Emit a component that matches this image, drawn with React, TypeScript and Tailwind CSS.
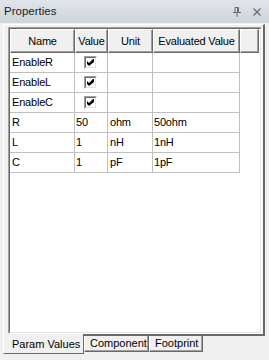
import React from 'react'

const rows = [
  { name: 'EnableR', check: true, value: '', unit: '', evaluated: '' },
  { name: 'EnableL', check: true, value: '', unit: '', evaluated: '' },
  { name: 'EnableC', check: true, value: '', unit: '', evaluated: '' },
  { name: 'R', check: false, value: '50', unit: 'ohm', evaluated: '50ohm' },
  { name: 'L', check: false, value: '1', unit: 'nH', evaluated: '1nH' },
  { name: 'C', check: false, value: '1', unit: 'pF', evaluated: '1pF' },
]

function CheckBox() {
  return (
    <span className="block w-[13px] h-[13px] border border-t-[#a0a0a0] border-l-[#a0a0a0] border-r-white border-b-white">
      <span className="flex items-center justify-center w-full h-full bg-white border border-t-[#696969] border-l-[#696969] border-r-[#e3e3e3] border-b-[#e3e3e3]">
        <svg width="7" height="7" viewBox="0 0 7 7">
          <polygon points="0,2 2,4 6,0 7,0 7,3 2,7 0,5" fill="#000" />
        </svg>
      </span>
    </span>
  )
}

function HeaderCell({ width, label }: { width: string; label?: string }) {
  return (
    <div
      className={`${width} h-full flex items-center justify-center bg-[#f0f0f0] border-l border-t border-l-white border-t-white border-r border-b border-r-[#696969] border-b-[#696969] shadow-[inset_-1px_-1px_0_#a0a0a0]`}
    >
      {label}
    </div>
  )
}

export default function App() {
  return (
    <div className="w-[269px] h-[360px] bg-[#f0f0f0] flex flex-col overflow-hidden text-black font-['Liberation_Sans',Arial,sans-serif]">
      {/* Title bar */}
      <div className="h-[23px] shrink-0 flex items-center pl-[4px] pr-[8px] bg-gradient-to-b from-[#e1e5ea] to-[#ced4db] text-[11.5px] text-[#1b1b1b]">
        <span className="flex-1">Properties</span>
        <svg width="8" height="10" viewBox="0 0 8 10" className="mr-[12px]">
          <path d="M2 0.5H5.5V5.5M2 0.5V5.5M0 5.5H8M4 5.5V10" stroke="#6b6b6b" strokeWidth="1" fill="none" />
          <path d="M4.5 1V5" stroke="#6b6b6b" strokeWidth="1" />
        </svg>
        <svg width="8" height="8" viewBox="0 0 8 8">
          <path d="M0.5 0.5L7.5 7.5M7.5 0.5L0.5 7.5" stroke="#6b6b6b" strokeWidth="1.3" />
        </svg>
      </div>

      {/* Tab page */}
      <div className="pl-[3px] pr-[4px] pt-[1px]">
        <div className="h-[312px] flex flex-col pl-[4px] pr-[1px] pt-[2px] border-l border-t border-l-white border-t-white border-r-2 border-b-2 border-r-[#696969] border-b-[#696969]">
          <div className="flex-1 border border-t-[#a0a0a0] border-l-[#a0a0a0] border-r-white border-b-white">
            <div className="h-full bg-white border border-t-[#696969] border-l-[#696969] border-r-[#e3e3e3] border-b-[#e3e3e3] text-[11px] tracking-[-0.2px]">
              <div className="h-[24px] flex">
                <HeaderCell width="w-[65px]" label="Name" />
                <HeaderCell width="w-[33px]" label="Value" />
                <HeaderCell width="w-[45px]" label="Unit" />
                <HeaderCell width="w-[87px]" label="Evaluated Value" />
                <HeaderCell width="w-[19px]" />
              </div>
              {rows.map((r) => (
                <div key={r.name} className="h-[20px] flex">
                  <div className="w-[65px] flex items-center pl-[2px] border-r border-b border-[#c0c0c0]">{r.name}</div>
                  <div className="w-[33px] flex items-center pl-[1px] border-r border-b border-[#c0c0c0]">
                    {r.check ? (
                      <span className="ml-[8px]">
                        <CheckBox />
                      </span>
                    ) : (
                      r.value
                    )}
                  </div>
                  <div className="w-[45px] flex items-center pl-[2px] border-r border-b border-[#c0c0c0]">{r.unit}</div>
                  <div className="w-[87px] flex items-center pl-[1px] border-r border-b border-[#c0c0c0]">{r.evaluated}</div>
                </div>
              ))}
            </div>
          </div>
        </div>

        {/* Tabs */}
        <div className="flex items-start text-[11px]">
          <div className="relative -mt-[2px] w-[81px] h-[20px] flex items-center pl-[8px] pt-[2px] bg-[#f0f0f0] border-l border-l-white border-r border-b border-r-[#696969] border-b-[#696969]">
            Param Values
          </div>
          <div className="w-[65px] h-[16px] flex items-center pl-[5px] border-l border-l-white border-r border-b border-r-[#696969] border-b-[#696969] shadow-[inset_-1px_-1px_0_#a0a0a0]">
            Component
          </div>
          <div className="w-[54px] h-[16px] flex items-center pl-[5px] border-l border-l-white border-r border-b border-r-[#696969] border-b-[#696969] shadow-[inset_-1px_-1px_0_#a0a0a0]">
            Footprint
          </div>
        </div>
      </div>
    </div>
  )
}
